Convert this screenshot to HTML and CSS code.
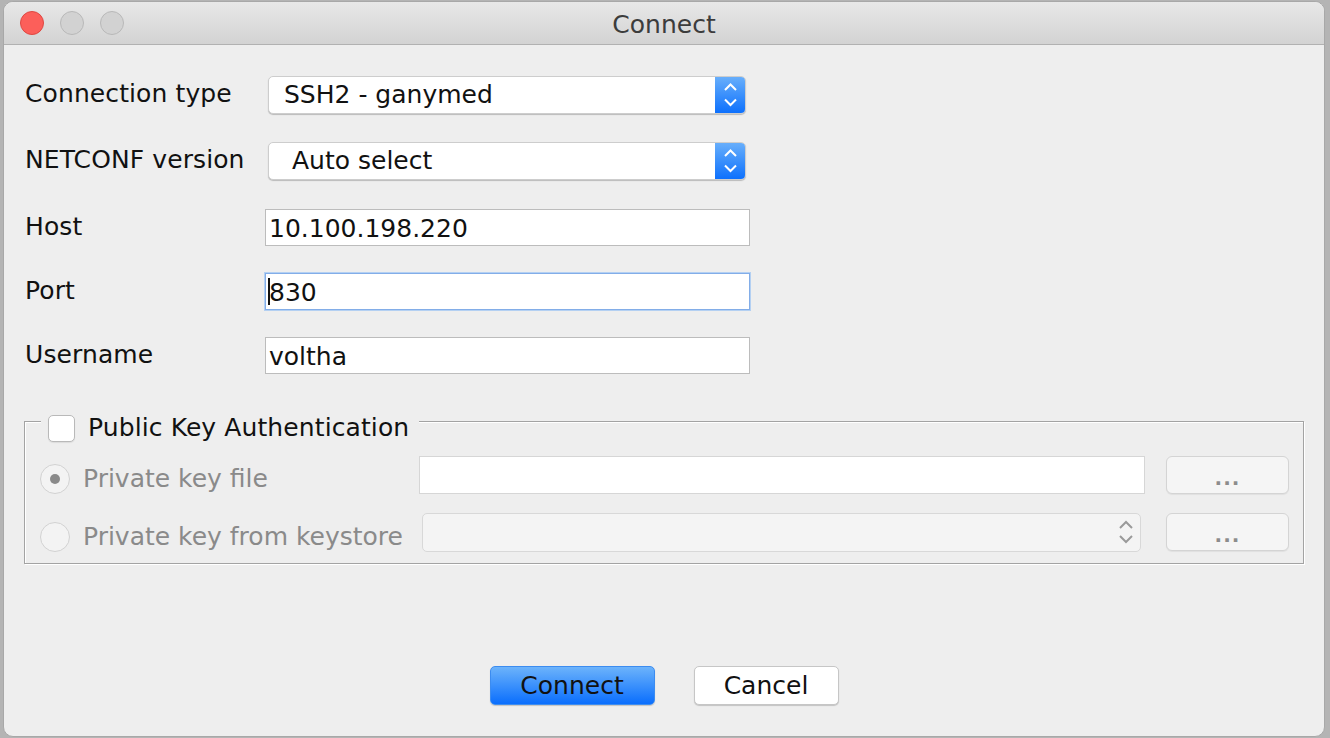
FILE: index.html
```html
<!DOCTYPE html>
<html>
<head>
<meta charset="utf-8">
<link rel="stylesheet" href="styles.css">
</head>
<body>
<div class="window">
  <div class="titlebar">
    <div class="lights">
      <span class="light red"></span>
      <span class="light"></span>
      <span class="light"></span>
    </div>
    <div class="title">Connect</div>
    <div></div>
  </div>
  <div class="content">
    <div class="row r1">
      <span class="lbl">Connection type</span>
      <div class="select">
        <span class="val">SSH2 - ganymed</span>
        <span class="stepper">
          <svg width="31" height="38" viewBox="0 0 31 38"><polyline points="10,14 15.5,8.5 21,14" fill="none" stroke="#fff" stroke-width="2"/><polyline points="10,23.5 15.5,29 21,23.5" fill="none" stroke="#fff" stroke-width="2"/></svg>
        </span>
      </div>
    </div>
    <div class="row r2">
      <span class="lbl">NETCONF version</span>
      <div class="select">
        <span class="val val2">Auto select</span>
        <span class="stepper">
          <svg width="31" height="38" viewBox="0 0 31 38"><polyline points="10,14 15.5,8.5 21,14" fill="none" stroke="#fff" stroke-width="2"/><polyline points="10,23.5 15.5,29 21,23.5" fill="none" stroke="#fff" stroke-width="2"/></svg>
        </span>
      </div>
    </div>
    <div class="row r3">
      <span class="lbl">Host</span>
      <div class="input">10.100.198.220</div>
    </div>
    <div class="row r4">
      <span class="lbl">Port</span>
      <div class="input focus"><span class="caret"></span>830</div>
    </div>
    <div class="row r5">
      <span class="lbl">Username</span>
      <div class="input">voltha</div>
    </div>

    <div class="group">
      <div class="legend">
        <span class="check"></span>
        <span class="legend-text">Public Key Authentication</span>
      </div>
      <div class="grow g1">
        <div class="opt"><span class="radio on"></span><span class="optlbl">Private key file</span></div>
        <div class="field"></div>
        <div class="dots">...</div>
      </div>
      <div class="grow g2">
        <div class="opt"><span class="radio"></span><span class="optlbl">Private key from keystore</span></div>
        <div class="combo">
          <svg width="20" height="30" viewBox="0 0 20 30"><polyline points="4,11 10,5 16,11" fill="none" stroke="#9a9a9a" stroke-width="2"/><polyline points="4,19 10,25 16,19" fill="none" stroke="#9a9a9a" stroke-width="2"/></svg>
        </div>
        <div class="dots">...</div>
      </div>
    </div>

    <div class="actions">
      <div class="btn primary">Connect</div>
      <div class="btn">Cancel</div>
    </div>
  </div>
</div>
</body>
</html>
```
FILE: styles.css
```css
html, body {
  margin: 0;
  padding: 0;
}
body {
  width: 1330px;
  height: 738px;
  overflow: hidden;
  background: #b4b4b4;
  font-family: "DejaVu Sans", "Verdana", sans-serif;
  color: #111;
}
.window {
  box-sizing: border-box;
  margin: 1px 5px 0 3px;
  height: 736px;
  background: #eeeeee;
  border: 1px solid #a8a8a8;
  border-radius: 10px;
  overflow: hidden;
  display: flex;
  flex-direction: column;
}
.titlebar {
  box-sizing: border-box;
  height: 43px;
  flex: none;
  background: linear-gradient(#e8e8e8, #d3d3d3);
  border-bottom: 1px solid #b1b1b1;
  display: grid;
  grid-template-columns: 1fr auto 1fr;
  align-items: center;
}
.lights {
  display: flex;
  gap: 16px;
  padding-left: 16px;
}
.light {
  box-sizing: border-box;
  width: 24px;
  height: 24px;
  border-radius: 50%;
  background: #d2d2d2;
  border: 1px solid #b8b8b8;
}
.light.red {
  background: #fc5f5a;
  border-color: #de4842;
}
.title {
  font-size: 25px;
  color: #3c3c3c;
  padding-top: 3px;
}
.content {
  flex: 1;
  padding: 31px 21px 0 21px;
  display: flex;
  flex-direction: column;
}
.row {
  display: flex;
  align-items: center;
}
.r1, .r2 { height: 38px; }
.r2 { margin-top: 28px; }
.r3 { height: 37px; margin-top: 29px; }
.r4, .r5 { height: 37px; margin-top: 27px; }
.lbl {
  width: 240px;
  font-size: 25px;
  padding-bottom: 3px;
  letter-spacing: 0.1px;
}
.select {
  box-sizing: border-box;
  margin-left: 3px;
  width: 478px;
  height: 38px;
  background: #fff;
  border-radius: 5px;
  border: 1px solid #cdcdcd;
  box-shadow: 0 1px 1px rgba(0,0,0,0.22);
  display: flex;
  align-items: center;
  overflow: hidden;
}
.val {
  flex: 1;
  font-size: 25px;
  padding-left: 15px;
  padding-bottom: 1px;
}
.val2 { padding-left: 23px; }
.stepper {
  width: 31px;
  height: 38px;
  margin-right: -1px;
  background: linear-gradient(#6ab0fb, #0b6ffd);
  display: flex;
}
.input {
  box-sizing: border-box;
  width: 485px;
  height: 37px;
  background: #fff;
  border: 1px solid #bcbcbc;
  font-size: 25px;
  padding-left: 3px;
  display: flex;
  align-items: center;
  padding-top: 1px;
  position: relative;
}
.input.focus {
  border-color: #82ade8;
  box-shadow: 0 0 0 1px #b4d0f2;
}
.caret {
  position: absolute;
  left: 2px;
  top: 4px;
  width: 2px;
  height: 27px;
  background: #111;
}
.group {
  position: relative;
  box-sizing: border-box;
  margin-top: 47px;
  margin-left: -1px;
  width: 1280px;
  height: 143px;
  border: 1px solid #a3a3a3;
  box-shadow: 1px 1px 0 #fff, inset 1px 1px 0 #fff;
  padding: 34px 14px 0 15px;
}
.legend {
  position: absolute;
  top: -9px;
  left: 16px;
  padding: 0 10px 0 7px;
  background: #eeeeee;
  display: flex;
  align-items: center;
  gap: 13px;
}
.check {
  box-sizing: border-box;
  width: 27px;
  height: 27px;
  background: #fff;
  border: 1px solid #b9b9b9;
  border-radius: 5px;
  box-shadow: 0 1px 1px rgba(0,0,0,0.08);
}
.legend-text {
  font-size: 25px;
  padding-bottom: 1px;
  letter-spacing: 0.1px;
}
.grow {
  display: grid;
  grid-template-columns: 379px 1fr 122px;
  align-items: center;
}
.g1 { height: 38px; }
.g2 { height: 39px; margin-top: 18px; }
.opt {
  display: flex;
  align-items: center;
  gap: 13px;
  padding-top: 8px;
}
.g2 .opt { padding-top: 10px; }
.radio {
  box-sizing: border-box;
  width: 30px;
  height: 30px;
  border-radius: 50%;
  background: #f3f3f3;
  border: 1px solid #d2d2d2;
  display: flex;
  align-items: center;
  justify-content: center;
}
.radio.on::after {
  content: "";
  width: 10px;
  height: 10px;
  border-radius: 50%;
  background: #8a8a8a;
}
.optlbl {
  font-size: 25px;
  color: #8a8a8a;
  padding-bottom: 1px;
  letter-spacing: 0;
}
.field {
  box-sizing: border-box;
  height: 38px;
  margin-right: 22px;
  background: #fff;
  border: 1px solid #d6d6d6;
}
.combo {
  box-sizing: border-box;
  height: 39px;
  margin: 0 26px 0 3px;
  background: #f4f4f4;
  border: 1px solid #d8d8d8;
  border-radius: 5px;
  display: flex;
  align-items: center;
  justify-content: flex-end;
  padding-right: 4px;
}
.dots {
  box-sizing: border-box;
  height: 38px;
  margin-left: -1px;
  background: #f5f5f5;
  border: 1px solid #d4d4d4;
  border-radius: 6px;
  box-shadow: 0 1px 1px rgba(0,0,0,0.06);
  color: #8c8c8c;
  font-size: 20px;
  font-weight: bold;
  letter-spacing: 1px;
  display: flex;
  justify-content: center;
  align-items: center;
  padding-top: 5px;
}
.actions {
  margin-top: 102px;
  display: flex;
  justify-content: center;
  gap: 39px;
}
.btn {
  box-sizing: border-box;
  width: 145px;
  height: 39px;
  border-radius: 5px;
  background: #fff;
  border: 1px solid #c6c6c6;
  box-shadow: 0 1px 1px rgba(0,0,0,0.18);
  font-size: 25px;
  display: flex;
  justify-content: center;
  align-items: center;
  padding-bottom: 1px;
}
.btn.primary {
  width: 165px;
  background: linear-gradient(#6cb3fb, #0a6efd);
  border-color: #3c8cf0;
}
```
